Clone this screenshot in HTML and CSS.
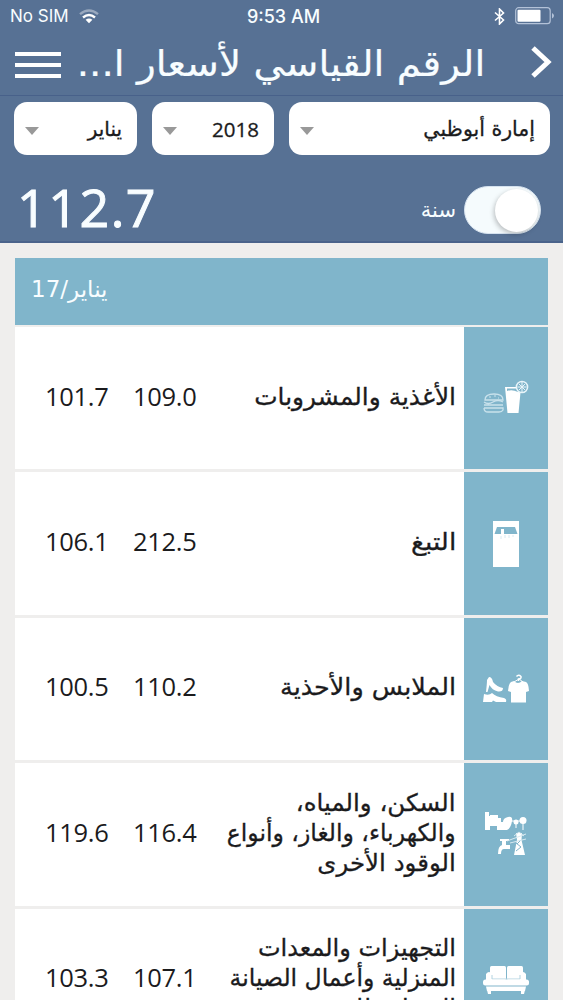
FILE: index.html
```
<!DOCTYPE html>
<html lang="ar" dir="rtl">
<head>
    <meta charset="UTF-8">
    <meta name="viewport" content="width=device-width, initial-scale=1.0">
    <title>الرقم القياسي لأسعار المستهلك</title>
    <link rel="stylesheet" href="styles.css">
</head>
<body>
    <header class="top">
        <div class="status" dir="ltr">
            <div class="carrier">
                <span>No SIM</span>
                <svg width="20" height="15" viewBox="0 0 20 15" fill="none" stroke="#fff" stroke-width="2.4">
                    <path d="M1 5.2Q10-2.4 19 5.2" opacity=".4"/>
                    <path d="M4 8.5Q10 3.3 16 8.5"/>
                    <path d="M10 14.2L6.6 10.8Q10 8 13.4 10.8Z" fill="#fff" stroke="none"/>
                </svg>
            </div>
            <div class="clock">9:53 AM</div>
            <div class="indicators">
                <svg width="11" height="17" viewBox="0 0 11 17" fill="none" stroke="#fff" stroke-width="1.6">
                    <path d="M1 4.5L9.5 12L5.5 16V1L9.5 5L1 12.5"/>
                </svg>
                <svg width="40" height="18" viewBox="0 0 40 18">
                    <rect x=".7" y=".7" width="34.5" height="16" rx="3" fill="none" stroke="#b3c2d8" stroke-width="1.2"/>
                    <rect x="2.5" y="2.7" width="23" height="12" rx="1" fill="#fff"/>
                    <path d="M37 6Q41 8.7 37 11.5Z" fill="#b3c2d8"/>
                </svg>
            </div>
        </div>
        <nav class="navbar">
            <svg class="back" width="22" height="32" viewBox="0 0 22 32" fill="none" stroke="#fff" stroke-width="5">
                <path d="M2 2L17 16L2 30"/>
            </svg>
            <h1><span>الرقم القياسي لأسعار ا...</span></h1>
            <div class="menu"><i></i><i></i><i></i></div>
        </nav>
        <div class="filters">
            <div class="select"><span class="region">إمارة أبوظبي</span></div>
            <div class="select"><span class="num">2018</span></div>
            <div class="select"><span>يناير</span></div>
        </div>
        <div class="summary">
            <div class="toggle"></div>
            <span class="year">سنة</span>
            <span class="total">112.7</span>
        </div>
    </header>
    <main class="list">
        <div class="list-head"><span>يناير/17</span></div>

        <div class="row">
            <div class="icon">
                <svg width="46" height="36" viewBox="0 0 46 36">
                    <path d="M22 7H38L35.5 33H24.5Z" fill="#fff"/>
                    <path d="M24 8.5H36L35 12Q29 9 24 11Z" fill="#80b5cb"/>
                    <circle cx="39" cy="7" r="5.6" fill="#80b5cb" stroke="#e8f5fa" stroke-width="1.5"/>
                    <path d="M39 2V12M34.5 7H43.5M36 4L42 10M42 4L36 10" stroke="#e8f5fa"/>
                    <g fill="none" stroke="#c9e2ec" stroke-width="1.3">
                        <path d="M2 20Q2 14 11 14T20 20Z"/>
                        <path d="M1 22Q5 25 10 22T20 22M1 25H20M1 28H20V30Q19 32 16 32H5Q1 32 1 28"/>
                        <path d="M6 17H8M11 16H13M15 18H16" stroke-width="1"/>
                    </g>
                </svg>
            </div>
            <p class="name"><span class="stretch">الأغذية والمشروبات</span></p>
            <span class="val">109.0</span>
            <span class="val">101.7</span>
        </div>

        <div class="row">
            <div class="icon">
                <svg width="26" height="46" viewBox="0 0 26 46">
                    <path d="M0 0H26V46H0Z" fill="#fff"/>
                    <path d="M4 6H22L24.5 13H1.5Z" fill="#80b5cb"/>
                    <path d="M8 8H11V16H8Z" fill="#fff"/>
                    <path d="M8 15V18M12 14V17M16 14V17M20 14V16" stroke="#d8eaf1"/>
                </svg>
            </div>
            <p class="name"><span class="stretch-more">التبغ</span></p>
            <span class="val">212.5</span>
            <span class="val">106.1</span>
        </div>

        <div class="row">
            <div class="icon">
                <svg width="46" height="30" viewBox="0 0 46 30" fill="#fff">
                    <path d="M31 7L28 8Q25.5 10 25 17L28 18V28.5H43V18L46 17Q45.5 9 43 8L39 7Q35 11 31 7Z"/>
                    <path d="M35.5 7V5Q38.5 5 38 2.5Q35.5 0 33.5 2.5" fill="none" stroke="#fff" stroke-width="1.5"/>
                    <path d="M31 8L36 5L40 8" fill="none" stroke="#fff"/>
                    <path d="M6 3Q9 3 10 8Q14 13 20 14Q20 18 15 17.5Q9 16 6.5 11L4.5 18H3Q4 9 4 6Z"/>
                    <path d="M1 20Q6 22 9 19Q13 23 21 24Q24 25 23 28H13L10 26.5L9 28H0Z"/>
                </svg>
            </div>
            <p class="name"><span class="stretch-mid">الملابس والأحذية</span></p>
            <span class="val">110.2</span>
            <span class="val">100.5</span>
        </div>

        <div class="row">
            <div class="icon">
                <svg width="46" height="44" viewBox="0 0 46 44" fill="#fff">
                    <path d="M2 0H6V4H7V3H15V6H18V10H20Q20 6 25 5Q30 4 29 9Q28 16 24 18H14V14H7V18H2Z"/>
                    <circle cx="33" cy="10" r="2.5"/>
                    <circle cx="40" cy="8.5" r="3.5"/>
                    <path d="M28 9H40M33 11V16M40 10V18" stroke="#fff"/>
                    <path d="M19 29H23V33H27V37H21Q18 37 18 42H15Q15 34 19 33Z"/>
                    <path d="M17 28H26M21 27V30" stroke="#fff" stroke-width="2"/>
                    <path d="M33 21H39L38.5 28L42 43H31L34 28Z"/>
                    <path d="M33 31L38 35L33 39M38 28L34 32" fill="none" stroke="#80b5cb"/>
                    <path d="M24 29L43 22M27 31L43 27M31 24L36 20L41 24" fill="none" stroke="#d8eaf1"/>
                </svg>
            </div>
            <p class="name">
                <span class="stretch-less">السكن، والمياه،</span>
                <span class="shrink">والكهرباء، والغاز، وأنواع</span>
                <span class="stretch-less">الوقود الأخرى</span>
            </p>
            <span class="val">116.4</span>
            <span class="val">119.6</span>
        </div>

        <div class="row">
            <div class="icon">
                <svg width="46" height="29" viewBox="0 0 46 29">
                    <rect x="7" y="1" width="16" height="14" rx="1.5" fill="#fff"/>
                    <rect x="24" y="1" width="16" height="14" rx="1.5" fill="#fff"/>
                    <path d="M3 9Q6 5 9 9L11 15H35L37 9Q40 5 43 9V15H3Z" fill="#fff"/>
                    <path d="M9 10V14H37V10" fill="none" stroke="#b2d3e0"/>
                    <rect x="0" y="14.5" width="46" height="6" rx="2.5" fill="#fff"/>
                    <path d="M3 21.5H43L42 26H4Z" fill="#fff"/>
                    <path d="M4 25H8V29H5ZM38 25H42L41 29H38Z" fill="#fff"/>
                </svg>
            </div>
            <p class="name">
                <span>التجهيزات والمعدات</span>
                <span class="shrink">المنزلية وأعمال الصيانة</span>
                <span>المعتادة للبيت</span>
            </p>
            <span class="val">107.1</span>
            <span class="val">103.3</span>
        </div>
    </main>
</body>
</html>
```

FILE: styles.css
```
* {
    box-sizing: border-box;
}
body {
    margin: 0;
    height: 1000px;
    overflow: hidden;
    background-color: #efeeed;
    font-family: "DejaVu Sans", sans-serif;
    color: #1b1b1d;
}
.top {
    height: 243px;
    background-color: #577194;
    border-bottom: 2px solid #4a638b;
    color: #f8fdff;
}
.status {
    display: grid;
    grid-template-columns: 1fr auto 1fr;
    align-items: center;
    height: 32px;
    padding: 0 8px 0 10px;
    font-family: Inter, sans-serif;
    font-size: 17px;
}
.carrier,
.indicators {
    display: flex;
    align-items: center;
    gap: 10px;
}
.indicators {
    justify-content: flex-end;
}
.clock {
    font-weight: 500;
    font-size: 18px;
    padding-left: 2px;
}
.navbar {
    display: flex;
    align-items: center;
    height: 64px;
    padding: 0 10px 0 15px;
    border-bottom: 1px solid #48618a;
}
.back {
    margin-top: -4px;
}
h1 {
    flex: 1;
    margin: 0 46px 0 0;
    font-size: 36px;
    font-weight: normal;
    line-height: 60px;
    white-space: nowrap;
    -webkit-text-stroke: 0.2px;
}
h1 span {
    display: inline-block;
    transform: scaleX(1.08);
    transform-origin: right;
}
.menu {
    display: flex;
    flex-direction: column;
    gap: 7px;
    width: 46px;
    padding-top: 2px;
}
.menu i {
    height: 4px;
    background-color: #fff;
}
.filters {
    display: grid;
    grid-template-columns: 261px 122px 123px;
    gap: 15px;
    padding: 6px 13px 0;
}
.select {
    display: flex;
    align-items: center;
    justify-content: space-between;
    height: 53px;
    padding: 0 15px 0 11px;
    border-radius: 13px;
    background-color: #fff;
    color: #1b1b1d;
    font-size: 20px;
    -webkit-text-stroke: 0.3px;
}
.select::after {
    content: "";
    margin-top: 4px;
    border: 7px solid transparent;
    border-top: 8px solid #999;
    border-bottom: 0;
}
.region {
    font-size: 20.5px;
}
.num {
    font-family: "Open Sans", sans-serif;
    font-size: 20.5px;
}
.summary {
    display: flex;
    align-items: center;
    height: 86px;
    padding: 23px 22px 0 17px;
}
.toggle {
    width: 77px;
    height: 48px;
    padding: 2px;
    border-radius: 24px;
    background-color: #f5fbfd;
    border: 1px solid #d5e2ef;
}
.toggle::before {
    content: "";
    display: block;
    width: 43px;
    height: 43px;
    border-radius: 50%;
    background-color: #fff;
    box-shadow: -1px 2px 5px rgba(0, 0, 0, .25);
}
.year {
    margin-right: 8px;
    font-size: 21px;
}
.total {
    margin-right: auto;
    padding-bottom: 6px;
    font-family: "Open Sans", sans-serif;
    font-size: 52px;
    letter-spacing: 1.5px;
    line-height: 42px;
    direction: ltr;
    -webkit-text-stroke: 1px;
}
.list {
    display: grid;
    grid-auto-rows: 142.4px;
    grid-template-rows: 66px;
    row-gap: 3px;
    height: 757px;
    padding: 15px 15px 0;
    overflow: hidden;
}
.list-head {
    height: 67px;
    padding: 0 16px;
    background-color: #80b5cb;
    color: #f8fdff;
    font-size: 23px;
    line-height: 62px;
    text-align: left;
}
.row {
    display: grid;
    grid-template-columns: 84px 1fr 64px 88px;
    align-items: center;
    padding-left: 30px;
    background-color: #fff;
}
.icon {
    display: flex;
    align-items: center;
    justify-content: center;
    height: 100%;
    background-color: #80b5cb;
}
.name {
    margin: 0;
    padding: 0 8px 3px 0;
    font-size: 24px;
    line-height: 30px;
    white-space: nowrap;
    -webkit-text-stroke: 0.3px;
}
.name span {
    display: block;
    width: max-content;
    transform-origin: right;
}
.shrink {
    transform: scaleX(0.98);
}
.stretch-less {
    transform: scaleX(1.02);
}
.stretch {
    transform: scaleX(1.035);
}
.stretch-mid {
    transform: scaleX(1.06);
}
.stretch-more {
    transform: scaleX(1.1);
}
.val {
    padding-bottom: 5px;
    font-family: "Open Sans", sans-serif;
    font-size: 25.5px;
    letter-spacing: -0.3px;
    direction: ltr;
    text-align: left;
}
```
